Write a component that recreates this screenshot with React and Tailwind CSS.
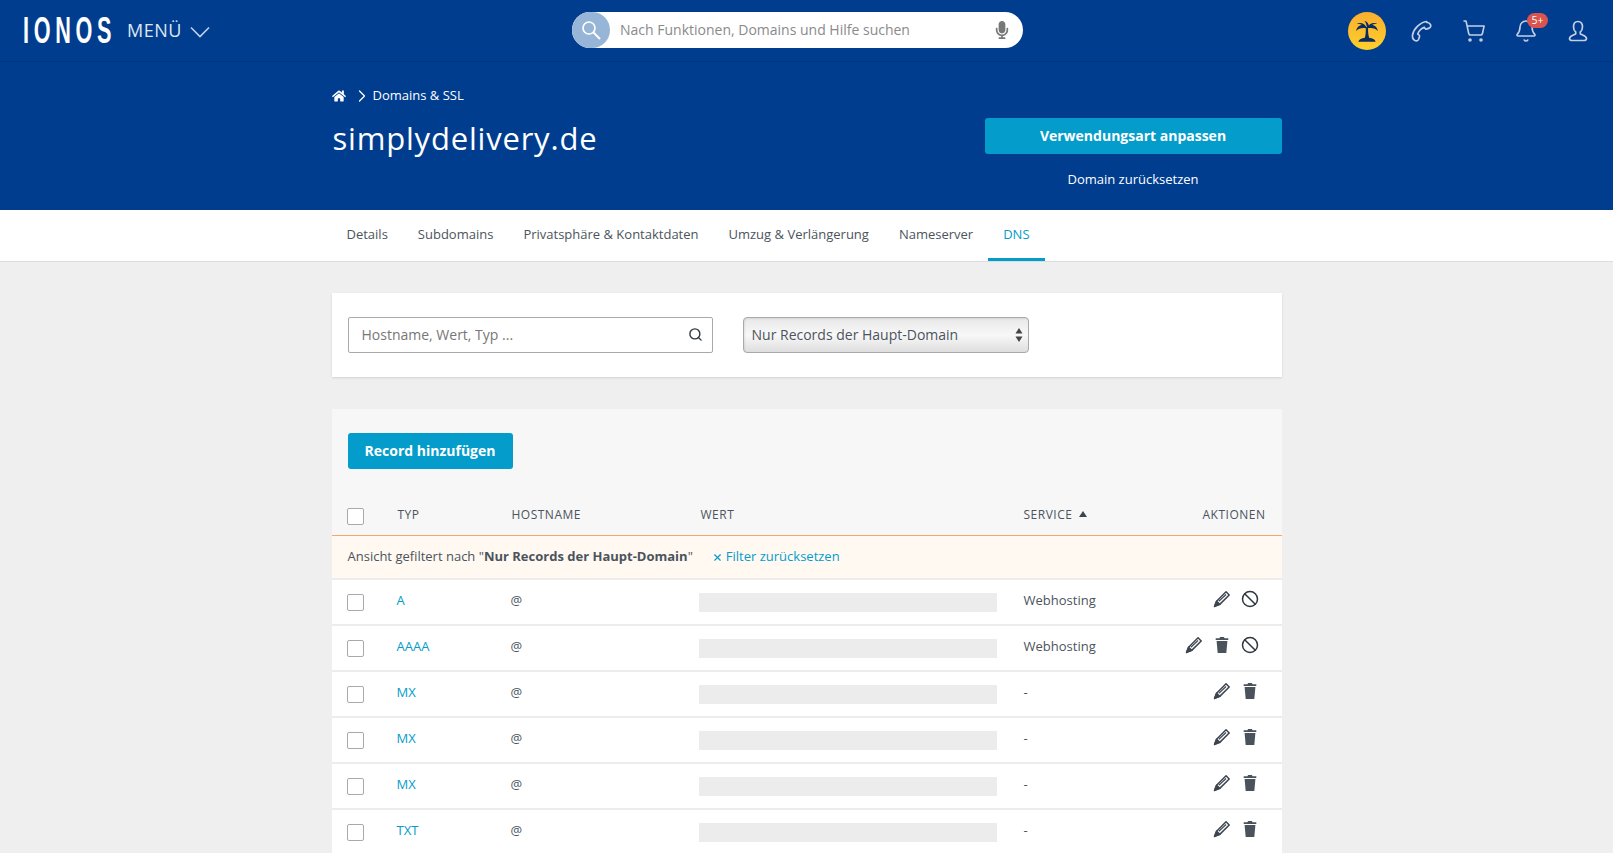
import React from "react";
import { Search, ChevronRight, ShoppingCart, Bell, Ban, X } from "lucide-react";
import { FaHome, FaMicrophone } from "react-icons/fa";

const Palm = () => (
  <svg viewBox="0 0 24 24" className="w-[26px] h-[26px]" fill="#0b2a5f">
    <path d="M10.800 8.500c.3 3.500 0 7.500-1 10.500h4.400c-1-3-1.400-7-1.200-10.500z" />
    <path d="M12 9.500C10 5 6 3.500 2.500 5.500c2.500-.2 4 .2 5 1C5 6.500 2.500 8.500 2 12c2-2.500 5.500-3.500 10-2.500z" />
    <path d="M12 9.500c2-4.500 6-6 9.500-4-2.500-.2-4 .2-5 1 2.500 0 5 2 5.500 5.500-2-2.500-5.500-3.500-10-2.500z" />
    <path d="M12 9C11.500 6 11 4 9.500 2.500 12 3 13.500 5 14 8z" />
    <path d="M4 22c.5-2.500 4-3.800 8-3.800s7.500 1.300 8 3.800z" />
  </svg>
);

const Phone = () => (
  <svg viewBox="0 0 24 24" className="w-[24px] h-[24px]" fill="none" stroke="#c3d0e6" strokeWidth="1.700" strokeLinejoin="round">
    <path d="M17.500 2.500c-6 .5-13 7.500-14 13.500-.3 2.500.5 4.500 2.500 5.500 1.500.7 3 .3 3.500-1l1-2.800c.3-.9-.1-1.700-1-2.200l-.8-.5c1-3 3.500-5.500 6.500-6.800l.7 1c.5.8 1.300 1 2.200.7l2-.8c1.500-.6 2-2 1.400-3.400-.7-1.700-2-2.300-3.500-2.200z" />
  </svg>
);

const UserIcon = () => (
  <svg viewBox="0 0 24 24" className="w-[24px] h-[24px]" fill="none" stroke="#c3d0e6" strokeWidth="1.700" strokeLinejoin="round">
    <path d="M12 2.500c-3 0-4.500 2.300-4.500 5.200 0 2.300.9 4.300 2.200 5.300v1.800c-1 1-6 1.700-6.200 4.700-.1 1.500 1.200 2 2.500 2h12c1.300 0 2.600-.5 2.500-2-.2-3-5.200-3.700-6.200-4.700V13c1.300-1 2.200-3 2.200-5.300 0-2.900-1.500-5.200-4.500-5.200z" />
  </svg>
);

const PencilIcon = () => (
  <svg viewBox="0 0 20 20" className="w-[18px] h-[18px]" fill="none" stroke="#3d4650" strokeWidth="1.700" strokeLinejoin="round">
    <path d="M14.500 2l3.500 3.500L7.500 16 1.800 18.200 4 12.500z" />
    <path d="M6.500 12.500l8-7.500" strokeWidth="1.200" />
    <path d="M1.800 18.200L4 12.500 7.500 16z" fill="#3d4650" />
  </svg>
);

const TrashIcon = () => (
  <svg viewBox="0 0 20 20" className="w-[18px] h-[18px]" fill="#4a535c">
    <path d="M7.800 1h4.400l.6 1.500H17v2H3v-2h4.200z" />
    <path d="M4 5.600h12l-1.200 13.200H5.200z" />
  </svg>
);

const Row = ({ typ, service, actions }) => (
  <div className="flex items-center h-[46px] border-b-2 border-[#ececec] bg-white text-[13px]">
    <span className="ml-[15px] w-[17px] h-[17px] border border-[#a9a9a9] rounded-[2px] bg-white shrink-0" />
    <a className="ml-[33px] w-[114px] mb-[2px] text-[#049ccb]">{typ}</a>
    <span className="w-[188px] mb-[2px]">@</span>
    <span className="w-[298px] h-[19px] mt-[1px] bg-[#ececec]" />
    <span className="ml-[27px] w-[110px] mb-[2px]">{service}</span>
    <span className="flex-1 flex items-center justify-end gap-[10px] pr-[23px] mb-[6px]">
      {actions.includes("edit") && <PencilIcon />}
      {actions.includes("trash") && <TrashIcon />}
      {actions.includes("ban") && <Ban size={18} color="#2f3740" strokeWidth={2} />}
    </span>
  </div>
);

const rows = [
  { typ: "A", service: "Webhosting", actions: ["edit", "ban"] },
  { typ: "AAAA", service: "Webhosting", actions: ["edit", "trash", "ban"] },
  { typ: "MX", service: "-", actions: ["edit", "trash"] },
  { typ: "MX", service: "-", actions: ["edit", "trash"] },
  { typ: "MX", service: "-", actions: ["edit", "trash"] },
  { typ: "TXT", service: "-", actions: ["edit", "trash"] },
];

const tabs = ["Details", "Subdomains", "Privatsphäre & Kontaktdaten", "Umzug & Verlängerung", "Nameserver", "DNS"];

export default function App() {
  return (
    <div className="h-[853px] overflow-hidden bg-[#efefef] text-[#4b545d] font-['Open_Sans',sans-serif]">
      {/* top bar */}
      <div className="h-[62px] bg-[#003d8f] border-b border-[#003580] relative flex items-center">
        <div className="ml-[23px] w-[89px] h-[40px]">
          <span className="inline-block origin-top-left scale-x-[0.585] font-['Liberation_Sans',sans-serif] font-bold text-[37px] leading-[40px] tracking-[8px] text-white whitespace-nowrap">IONOS</span>
        </div>
        <span className="ml-[15px] text-[#dfe7f3] text-[18px] tracking-[0.5px]">MENÜ</span>
        <svg viewBox="0 0 20 12" className="ml-[8px] mt-[3px] w-[20px] h-[12px]" fill="none" stroke="#c3d0e6" strokeWidth="1.600">
          <path d="M1 1.500l9 9 9-9" />
        </svg>
        <div className="absolute left-[572px] top-[12px] w-[451px] h-[36px] bg-white rounded-full flex items-center">
          <span className="w-[38px] h-[36px] rounded-full bg-[#97b5d6] flex items-center justify-center">
            <svg viewBox="0 0 20 20" className="w-[20px] h-[20px]" fill="none" stroke="#fff" strokeWidth="1.700">
              <circle cx="8" cy="8" r="6" />
              <path d="M12.500 12.500L19 19" strokeWidth="2" />
            </svg>
          </span>
          <span className="ml-[10px] mb-[2px] text-[14px] text-[#8a8a8a]">Nach Funktionen, Domains und Hilfe suchen</span>
          <FaMicrophone className="ml-auto mr-[12px]" size={18} color="#777" />
        </div>
        <div className="ml-auto flex items-center">
          <span className="w-[38px] h-[38px] rounded-full bg-gradient-to-b from-[#fbae2f] to-[#fdd02c] flex items-center justify-center">
            <Palm />
          </span>
          <span className="ml-[23px]"><Phone /></span>
          <span className="ml-[29px]"><ShoppingCart size={24} color="#c3d0e6" strokeWidth={1.600} /></span>
          <span className="ml-[28px] relative">
            <Bell size={24} color="#c3d0e6" strokeWidth={1.600} />
            <span className="absolute -top-[6px] left-[13px] h-[15px] w-[21px] text-center rounded-full bg-[#d9534f] text-white text-[10.500px] leading-[15px]">5+</span>
          </span>
          <span className="ml-[28px] mr-[23px]"><UserIcon /></span>
        </div>
      </div>

      {/* domain header */}
      <div className="h-[148px] bg-[#003d8f] text-white">
        <div className="w-[950px] mx-auto flex justify-between">
          <div>
            <div className="flex items-center mt-[25px] text-[13px] h-[18px]">
              <FaHome size={14} />
              <ChevronRight className="ml-[6px]" size={20} strokeWidth={1.500} />
              <span className="ml-[1px]">Domains & SSL</span>
            </div>
            <h1 className="mt-[12px] ml-[1px] text-[31px] leading-[42px] tracking-[0.8px]">simplydelivery.de</h1>
          </div>
          <div className="w-[297px] mt-[56px]">
            <div className="h-[36px] pb-[2px] rounded-[3px] bg-[#049ccb] flex items-center justify-center font-bold text-[14px]">Verwendungsart anpassen</div>
            <div className="mt-[16px] text-center text-[13px] font-medium">Domain zurücksetzen</div>
          </div>
        </div>
      </div>

      {/* tabs */}
      <div className="h-[52px] bg-white border-b border-[#dcdcdc]">
        <div className="w-[950px] mx-auto flex text-[13px] h-[51px]">
          {tabs.map((t) => (
            <div
              key={t}
              className={
                t === "DNS"
                  ? "px-[15px] pt-[1px] flex items-center text-[#049ccb] border-b-[3px] border-[#049ccb]"
                  : "px-[15px] pb-[2px] flex items-center"
              }
            >
              {t}
            </div>
          ))}
        </div>
      </div>

      <div className="w-[950px] mx-auto">
        {/* filter card */}
        <div className="mt-[31px] h-[84px] bg-white shadow-[0_1px_2px_rgba(0,0,0,0.12)] flex items-center pl-[16px]">
          <div className="w-[365px] h-[36px] border border-[#a9a9a9] rounded-[2px] flex items-center pl-[13px] pr-[9px] pb-[2px] text-[14px] text-[#777]">
            Hostname, Wert, Typ ...
            <Search className="ml-auto" size={15} color="#2f3740" strokeWidth={2.200} />
          </div>
          <div className="ml-[30px] w-[286px] h-[36px] border border-[#a9a9a9] rounded-[4px] bg-gradient-to-b from-[#e8e8e8] via-[#f8f8f8] to-[#dedede] shadow-[inset_1px_1px_2px_rgba(0,0,0,0.08)] flex items-center pl-[8px] pr-[5px] pb-[2px] text-[14px]">
            Nur Records der Haupt-Domain
            <svg viewBox="0 0 8 14" className="ml-auto mt-[2px] w-[8px] h-[14px]" fill="#444">
              <path d="M4 0l3.500 5.500h-7zM4 14L.5 8.500h7z" />
            </svg>
          </div>
        </div>

        {/* record table */}
        <div className="mt-[32px] bg-[#f7f7f7]">
          <div className="pt-[24px] pl-[16px]">
            <div className="w-[165px] h-[36px] pb-[2px] rounded-[3px] bg-[#049ccb] text-white font-bold text-[14px] flex items-center justify-center">Record hinzufügen</div>
          </div>
          <div className="h-[67px] flex items-center pt-[26px] text-[12px] tracking-[0.5px] border-b border-[#f9a66a]">
            <span className="ml-[15px] mt-[2px] w-[17px] h-[17px] border border-[#a9a9a9] rounded-[2px] bg-white shrink-0" />
            <span className="ml-[34px] w-[114px]">TYP</span>
            <span className="w-[189px]">HOSTNAME</span>
            <span className="w-[323px]">WERT</span>
            <span className="flex items-center">
              SERVICE
              <svg viewBox="0 0 8 6" className="ml-[7px] mb-[2px] w-[8px] h-[6px]" fill="#3d4650">
                <path d="M4 0l4 6H0z" />
              </svg>
            </span>
            <span className="ml-auto pr-[16px]">AKTIONEN</span>
          </div>
          <div className="h-[44px] bg-[#fff9f2] border-b-2 border-[#ececec] flex items-center pl-[16px] text-[13px]">
            Ansicht gefiltert nach "<b>Nur Records der Haupt-Domain</b>"
            <span className="ml-[19px] text-[#049ccb] flex items-center">
              <X size={11} strokeWidth={2.500} className="mr-[3px]" />
              Filter zurücksetzen
            </span>
          </div>
          {rows.map((r, i) => (
            <Row key={i} {...r} />
          ))}
        </div>
      </div>
    </div>
  );
}
